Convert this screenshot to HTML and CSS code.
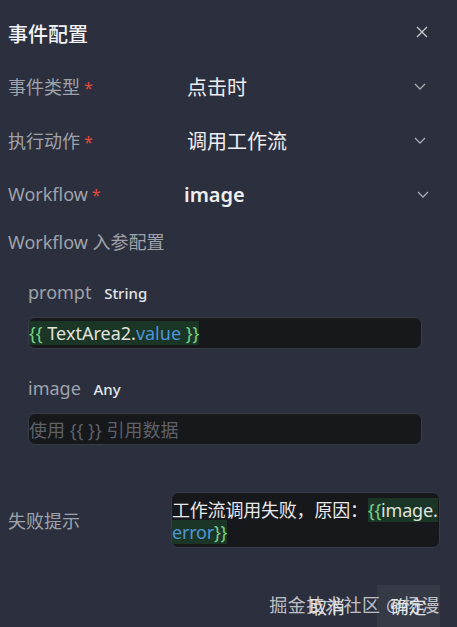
FILE: index.html
```html
<!DOCTYPE html>
<html lang="zh-CN">
<head>
  <meta charset="UTF-8">
  <meta name="viewport" content="width=device-width, initial-scale=1.0">
  <title>事件配置</title>
  <link rel="stylesheet" href="styles.css">
</head>
<body>
  <div class="panel">
    <div class="header">
      <h1 class="title">事件配置</h1>
      <svg class="close" width="12" height="12" viewBox="0 0 12 12"><path d="M1 1L11 11M11 1L1 11" stroke="#c3c5cc" stroke-width="1.4" fill="none"/></svg>
    </div>

    <div class="form">
      <div class="row">
        <span class="label">事件类型<i class="req">*</i></span>
        <span class="value">点击时</span>
        <svg class="chevron" width="12" height="7" viewBox="0 0 12 7"><path d="M1 1L6 6L11 1" stroke="#a9abb3" stroke-width="1.3" fill="none"/></svg>
      </div>
      <div class="row">
        <span class="label">执行动作<i class="req">*</i></span>
        <span class="value">调用工作流</span>
        <svg class="chevron" width="12" height="7" viewBox="0 0 12 7"><path d="M1 1L6 6L11 1" stroke="#a9abb3" stroke-width="1.3" fill="none"/></svg>
      </div>
      <div class="row">
        <span class="label">Workflow<i class="req">*</i></span>
        <span class="value value-latin">image</span>
        <svg class="chevron chevron-wide" width="12" height="7" viewBox="0 0 12 7"><path d="M1 1L6 6L11 1" stroke="#a9abb3" stroke-width="1.3" fill="none"/></svg>
      </div>
      <div class="section-title">Workflow 入参配置</div>
    </div>

    <div class="params">
      <div class="param-name">prompt <span class="type">String</span></div>
      <div class="input">
        <span class="expr"><span class="brace">{{</span> TextArea2.<span class="prop">value</span> <span class="brace">}}</span></span>
      </div>

      <div class="param-name">image <span class="type">Any</span></div>
      <div class="input">
        <span class="placeholder">使用 {{ }} 引用数据</span>
      </div>
    </div>

    <div class="fail-row">
      <span class="label">失败提示</span>
      <div class="textarea">
        <div class="line">工作流调用失败，原因：<span class="expr"><span class="brace">{{</span>image.</span></div>
        <div class="line"><span class="expr"><span class="prop">error</span><span class="brace">}}</span></span></div>
      </div>
    </div>

    <div class="footer">
      <button class="btn">取消</button>
      <button class="btn btn-primary">确定</button>
      <span class="watermark">掘金技术社区 @杨漫</span>
    </div>
  </div>
</body>
</html>
```

FILE: styles.css
```css
/* dark event config panel */
html, body {
  margin: 0;
  background: #2c303e;
}

.panel {
  width: 457px;
  height: 627px;
  padding: 0 8px;
  box-sizing: border-box;
  font-family: "Noto Sans", "Noto Sans CJK SC", sans-serif;
  color: #e6e7ea;
  position: relative;
}

.header {
  height: 66px;
  display: flex;
  align-items: center;
  justify-content: space-between;
}

.title {
  margin: 0;
  font-size: 20px;
  font-weight: 500;
  color: #f2f2f4;
}

.close {
  margin-right: 21px;
  margin-top: -2px;
}

.form {
  display: flex;
  flex-direction: column;
  gap: 14px;
}

.row {
  height: 40px;
  display: flex;
  align-items: center;
}

.label {
  font-size: 18px;
  color: #9fa2aa;
  width: 179px;
  flex-shrink: 0;
}

.req {
  font-style: normal;
  color: #e5483b;
  margin-left: 4px;
  font-size: 16px;
}

.value {
  flex: 1;
  font-size: 20px;
  font-weight: 400;
  color: #eeeef0;
}

.value-latin {
  margin-left: -3px;
  font-weight: 600;
}

.chevron {
  margin-right: 23px;
}

.chevron-wide {
  margin-right: 20px;
}

.section-title {
  height: 28px;
  line-height: 28px;
  font-size: 18px;
  color: #9fa2aa;
}

.params {
  padding-left: 20px;
  padding-top: 24px;
}

.param-name {
  height: 24px;
  line-height: 24px;
  font-size: 18px;
  color: #9fa2aa;
}

.param-name + .input {
  margin-top: 13px;
}

.input + .param-name {
  margin-top: 27px;
}

.type {
  font-size: 15px;
  font-weight: 500;
  color: #e4e5e8;
  margin-left: 8px;
}

.input {
  width: 394px;
  height: 32px;
  box-sizing: border-box;
  background: #16181c;
  border: 1px solid #393c46;
  border-radius: 7px;
  display: flex;
  align-items: center;
  font-size: 18px;
}

.expr {
  background: #1b3527;
  color: #e0e4dc;
}

.brace {
  color: #79d186;
}

.prop {
  color: #4f95da;
}

.placeholder {
  color: #5e6168;
}

.fail-row {
  display: flex;
  align-items: center;
  margin-top: 47px;
}

.fail-row .label {
  width: 163px;
}

.textarea {
  width: 269px;
  height: 56px;
  box-sizing: border-box;
  background: #16181c;
  border: 1px solid #393c46;
  border-radius: 7px;
  padding-top: 6px;
  font-size: 18px;
  line-height: 22px;
  color: #e8e8ea;
}

.line {
  white-space: nowrap;
  letter-spacing: -0.2px;
}

.footer {
  position: absolute;
  right: 17px;
  bottom: 0;
  height: 42px;
  display: flex;
  align-items: center;
  gap: 32px;
}

.btn {
  font-family: inherit;
  font-size: 18px;
  color: #e2e3e6;
  background: transparent;
  border: none;
  padding: 0;
  height: 42px;
}

.btn-primary {
  background: rgba(255, 255, 255, 0.05);
  width: 63px;
}

.watermark {
  position: absolute;
  right: 0;
  top: 50%;
  transform: translateY(-50%);
  margin-top: -2px;
  white-space: nowrap;
  font-size: 18px;
  letter-spacing: 0.6px;
  color: rgba(230, 231, 235, 0.8);
}
```
